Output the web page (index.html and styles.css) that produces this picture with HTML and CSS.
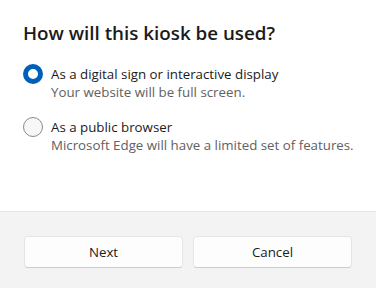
FILE: index.html
```html
<!DOCTYPE html>
<html lang="en">
<head>
    <meta charset="UTF-8">
    <meta name="viewport" content="width=device-width, initial-scale=1.0">
    <title>Kiosk setup</title>
    <link rel="stylesheet" href="styles.css">
</head>
<body>
    <div class="dialog">
        <!-- Question -->
        <div class="dialog-body">
            <h2 class="dialog-title">How will this kiosk be used?</h2>
            <div class="options">
                <label class="option">
                    <span class="radio checked"></span>
                    <span class="option-text">
                        <span class="option-title">As a digital sign or interactive display</span>
                        <span class="option-desc">Your website will be full screen.</span>
                    </span>
                </label>
                <label class="option">
                    <span class="radio"></span>
                    <span class="option-text">
                        <span class="option-title">As a public browser</span>
                        <span class="option-desc">Microsoft Edge will have a limited set of features.</span>
                    </span>
                </label>
            </div>
        </div>

        <!-- Buttons -->
        <div class="dialog-footer">
            <button class="btn">Next</button>
            <button class="btn">Cancel</button>
        </div>
    </div>
</body>
</html>
```

FILE: styles.css
```css
/* Windows style dialog */
body {
    margin: 0;
    padding: 0;
    background-color: #fff;
    font-family: "Open Sans", "Noto Sans", sans-serif;
    color: #1b1b1b;
}
.dialog {
    display: flex;
    flex-direction: column;
    height: 288px;
}
.dialog-body {
    flex-grow: 1;
    padding: 19px 16px 0 23px;
}
.dialog-title {
    margin: 0 0 18px;
    font-size: 18.8px;
    line-height: 28px;
    font-weight: 600;
}
.options {
    display: flex;
    flex-direction: column;
    gap: 17px;
}
.option {
    display: flex;
    align-items: flex-start;
    gap: 8px;
}
.radio {
    box-sizing: border-box;
    flex-shrink: 0;
    width: 20px;
    height: 20px;
    margin-top: -1px;
    border: 1px solid #8a8a8a;
    border-radius: 50%;
    background-color: #f7f7f7;
}
.radio.checked {
    border: 5px solid #005fb8;
    background-color: #fff;
}
.option-text {
    display: flex;
    flex-direction: column;
}
.option-title {
    font-size: 13.3px;
    line-height: 18px;
}
.option-desc {
    font-size: 13.3px;
    line-height: 18px;
    color: #616161;
    white-space: nowrap;
}
.dialog-footer {
    display: grid;
    grid-template-columns: 1fr 1fr;
    gap: 10px;
    padding: 24px 24px 20px;
    background-color: #f3f3f3;
    border-top: 1px solid #e5e5e5;
}
.btn {
    height: 32px;
    font-family: inherit;
    font-size: 13.3px;
    color: #1b1b1b;
    background-color: #fdfdfd;
    border: 1px solid #e5e5e5;
    border-bottom-color: #cccccc;
    border-radius: 4px;
}
```
